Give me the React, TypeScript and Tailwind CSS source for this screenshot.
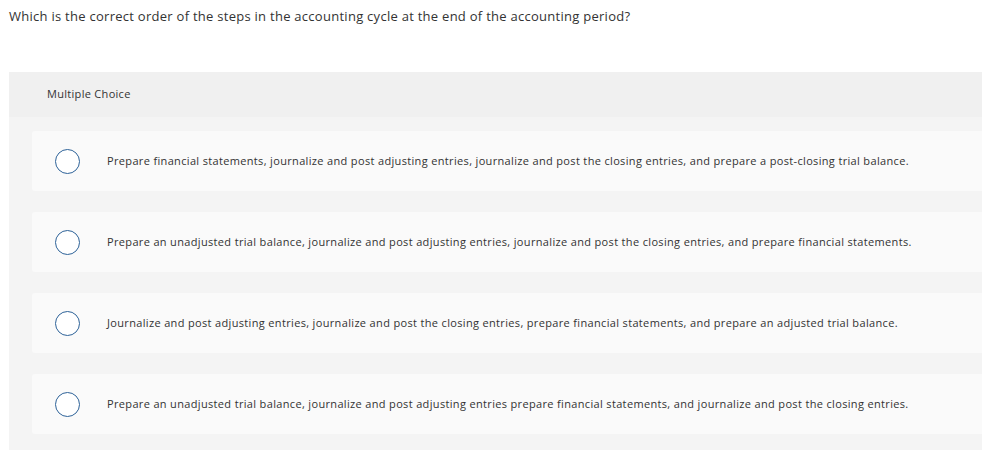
const options = [
  "Prepare financial statements, journalize and post adjusting entries, journalize and post the closing entries, and prepare a post-closing trial balance.",
  "Prepare an unadjusted trial balance, journalize and post adjusting entries, journalize and post the closing entries, and prepare financial statements.",
  "Journalize and post adjusting entries, journalize and post the closing entries, prepare financial statements, and prepare an adjusted trial balance.",
  "Prepare an unadjusted trial balance, journalize and post adjusting entries prepare financial statements, and journalize and post the closing entries.",
];

export default function App() {
  return (
    <div
      className="h-[450px] w-[982px] overflow-hidden bg-white text-[#333]"
      style={{ fontFamily: '"Open Sans", "Liberation Sans", sans-serif' }}
    >
      <p className="pl-[9px] pt-[7px] text-[13px] leading-[18px] tracking-[0.27px]">
        Which is the correct order of the steps in the accounting cycle at the end of the accounting period?
      </p>

      <div className="ml-[9px] mt-[47px] bg-[#f4f4f4] pb-[20px]">
        <div className="flex h-[45px] items-center bg-[#f0f0f0] pb-[1px] pl-[38px] text-[11px] tracking-[0.3px]">
          Multiple Choice
        </div>
        <div className="flex flex-col gap-[21px] pl-[23px] pt-[14px]">
          {options.map((o) => (
            <div
              key={o}
              className="flex h-[60px] items-center rounded-l-[3px] bg-[#fafafa] pl-[23px]"
            >
              <span className="h-[25px] w-[25px] shrink-0 rounded-full border-[1.5px] border-[#2d6298] bg-white" />
              <span className="ml-[27px] pb-[2px] text-[11px] leading-none tracking-[0.34px]">{o}</span>
            </div>
          ))}
        </div>
      </div>
    </div>
  );
}
